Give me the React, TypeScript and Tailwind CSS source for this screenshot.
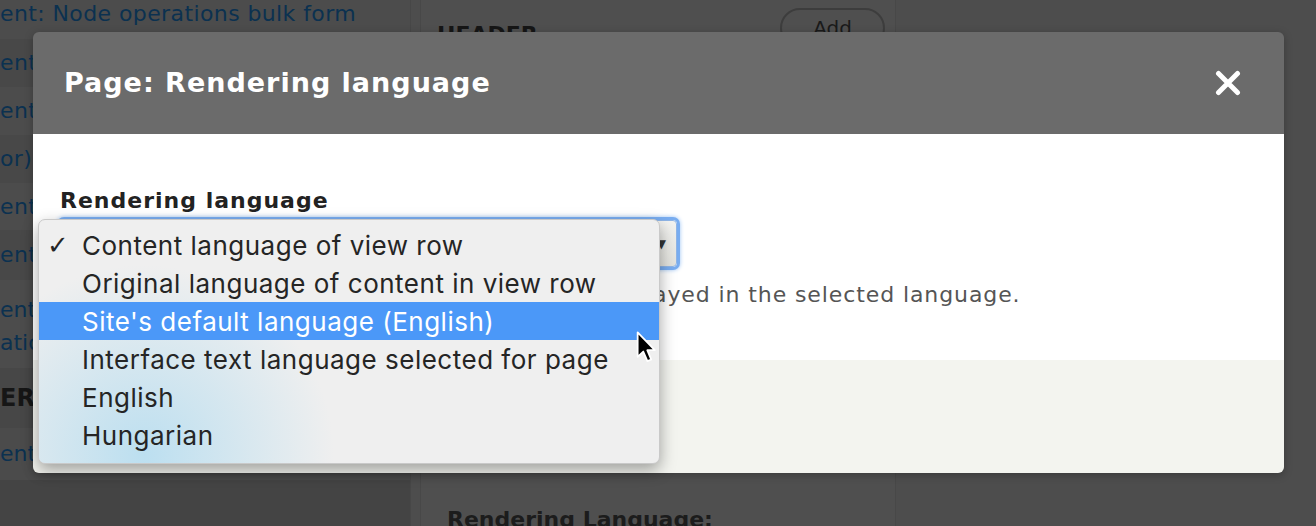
import React from 'react';

const sans = "font-['DejaVu_Sans',sans-serif]";

const leftRows = [
  { text: 'ent: Node operations bulk form', cls: 'h-[39px] bg-[#4c4c4c] pt-[1px]' },
  { text: 'ent: Content ID', cls: 'h-[48px] bg-[#484848] items-center' },
  { text: 'ent: Title', cls: 'h-[48px] bg-[#4c4c4c] items-center' },
  { text: 'or)', cls: 'h-[48px] bg-[#484848] items-center' },
  { text: 'ent: Content type', cls: 'h-[47px] bg-[#4c4c4c] items-center' },
  { text: 'ent: Published', cls: 'h-[50px] bg-[#484848] items-center' },
];

const options = [
  'Content language of view row',
  'Original language of content in view row',
  "Site's default language (English)",
  'Interface text language selected for page',
  'English',
  'Hungarian',
];

function CloseIcon() {
  return (
    <svg width="26" height="26" viewBox="0 0 26 26">
      <path d="M3.5 3.5 L22.5 22.5 M22.5 3.5 L3.5 22.5" stroke="#ffffff" strokeWidth="5" strokeLinecap="round" />
    </svg>
  );
}

function Cursor() {
  return (
    <svg width="24" height="34" viewBox="0 0 16 23">
      <path
        d="M1 1 L1 17.5 L4.8 13.9 L7.6 20.4 L10.2 19.3 L7.5 13 L12.6 13 Z"
        fill="#000000"
        stroke="#ffffff"
        strokeWidth="1.2"
        strokeLinejoin="round"
      />
    </svg>
  );
}

export default function App() {
  return (
    <div className={`relative w-[1316px] h-[526px] overflow-hidden bg-[#4b4b4b] ${sans}`}>
      {/* page behind the overlay */}
      <div className="flex h-full bg-[#4b4b4b]">
        <div className="w-[410px] flex flex-col">
          {leftRows.map((r, i) => (
            <div key={i} className={`flex ${r.cls}`}>
              <span className="text-[22px] leading-[26px] tracking-[0.4px] text-[#0b3150] whitespace-nowrap">{r.text}</span>
            </div>
          ))}
          <div className="h-[88px] bg-[#4c4c4c] flex flex-col pt-[10px]">
            <span className="text-[22px] leading-[40px] text-[#0b3150] whitespace-nowrap">ent: Authored by</span>
            <span className="text-[22px] leading-[26px] text-[#0b3150] whitespace-nowrap">atio</span>
          </div>
          <div className="h-[60px] bg-[#474747] flex items-center">
            <span className="text-[24px] font-bold text-[#161616] whitespace-nowrap">ER CONTEXTUAL FILTERS</span>
          </div>
          <div className="h-[52px] bg-[#4b4b4b] flex items-center">
            <span className="text-[22px] leading-[26px] text-[#0b3150] whitespace-nowrap">ent: Has taxonomy term</span>
          </div>
          <div className="flex-1 bg-[#444444]" />
        </div>
        <div className="w-[10px] bg-[#4d4d4d] border-l border-[#474747]" />
        <div className="w-[476px] bg-[#4f4f4f] border-x border-[#484848] flex flex-col px-[16px] pt-[14px]">
          <div className="flex items-start justify-between">
            <span className="text-[22px] font-bold text-[#161616] mt-[4px]">HEADER</span>
            <span className="-mr-[6px] -mt-[6px] w-[105px] h-[40px] rounded-full border-2 border-[#3d3d3d] flex items-center justify-center text-[20px] text-[#1a1a1a]">
              Add
            </span>
          </div>
          <div className="mt-auto pl-[10px] mb-[-10px]">
            <span className="text-[22px] font-bold text-[#1c1c1c]">Rendering Language:</span>
          </div>
        </div>
        <div className="flex-1 bg-[#4d4d4d]" />
      </div>

      {/* dialog */}
      <div className="absolute left-[33px] top-[32px] w-[1251px] h-[441px] rounded-[6px] overflow-hidden flex flex-col shadow-[0_2px_8px_rgba(0,0,0,0.25)]">
        <div className="h-[102px] bg-[#6b6b6b] flex items-center justify-between pl-[31px] pr-[43px]">
          <span className="text-[27px] font-bold text-white tracking-[1px]">Page: Rendering language</span>
          <CloseIcon />
        </div>
        <div className="h-[226px] bg-white pl-[27px] pt-[54px]">
          <div className="text-[22px] leading-[26px] font-bold text-[#222222] tracking-[1px]">Rendering language</div>
          <div className="mt-[6px] w-[617px] h-[47px] rounded-[4px] border border-[#8fb5e6] bg-gradient-to-b from-[#f3f3f0] to-[#e2e2dd] shadow-[0_0_0_3px_#79adf0,0_0_4px_3px_#9cc4f4] flex items-center justify-end pr-[10px]">
            <span className="text-[12px] text-[#333333]">▼</span>
          </div>
          <div className="mt-[16px] text-[22px] leading-[24px] text-[#555555] tracking-[0.9px] whitespace-nowrap">
            All content that supports translations will be displayed in the selected language.
          </div>
        </div>
        <div className="flex-1 bg-[#f3f4ef]" />
      </div>

      {/* native select popup */}
      <div className="absolute left-[38px] top-[219px] w-[622px] h-[245px] rounded-[7px] border border-[#c9c9c9] bg-[#efefef] shadow-[0_6px_16px_rgba(0,0,0,0.35)] overflow-hidden pt-[6px] pb-[8px] font-['Inter',sans-serif]">
        <div className="absolute inset-0 bg-[radial-gradient(circle_at_105px_235px,rgba(185,222,240,0.95),rgba(239,239,239,0)_190px)]" />
        {options.map((o, i) => (
          <div
            key={o}
            className={`relative h-[38px] flex items-center text-[26px] tracking-[0.5px] ${
              i === 2 ? 'bg-[#4b98f8] text-white' : 'text-[#252525]'
            }`}
          >
            <span className="w-[43px] pl-[8px] text-[26px] font-bold font-['DejaVu_Sans',sans-serif]">{i === 0 ? '✓' : ''}</span>
            <span>{o}</span>
          </div>
        ))}
      </div>

      <div className="absolute left-[636px] top-[331px]">
        <Cursor />
      </div>
    </div>
  );
}
